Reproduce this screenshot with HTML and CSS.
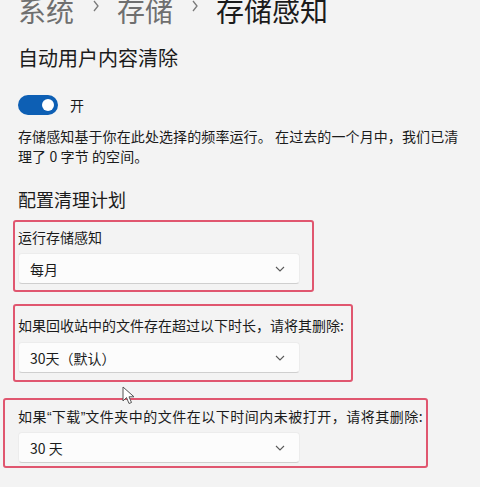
FILE: index.html
```html
<!DOCTYPE html>
<html lang="zh-CN">
<head>
    <meta charset="UTF-8">
    <meta name="viewport" content="width=device-width, initial-scale=1.0">
    <title>存储感知</title>
    <link rel="stylesheet" href="styles.css">
</head>
<body>
    <div class="page">
        <div class="breadcrumb">
            <span class="crumb">系统</span>
            <svg class="crumb-sep" width="8" height="12" viewBox="0 0 8 12"><polyline points="2,1 6,6 2,11" fill="none" stroke="#7a7a7a" stroke-width="1.3"/></svg>
            <span class="crumb">存储</span>
            <svg class="crumb-sep" width="8" height="12" viewBox="0 0 8 12"><polyline points="2,1 6,6 2,11" fill="none" stroke="#7a7a7a" stroke-width="1.3"/></svg>
            <span class="crumb current">存储感知</span>
        </div>

        <h2 class="section-title">自动用户内容清除</h2>

        <div class="toggle-row">
            <div class="toggle"><div class="knob"></div></div>
            <span>开</span>
        </div>

        <p class="desc">存储感知基于你在此处选择的频率运行。 在过去的一个月中，我们已清理了 0 字节 的空间。</p>

        <h3 class="sub-title">配置清理计划</h3>

        <div class="mark mark-1">
            <div class="field-label">运行存储感知</div>
            <div class="select">
                <span>每月</span>
                <svg width="10" height="6" viewBox="0 0 10 6"><polyline points="1,1 5,5 9,1" fill="none" stroke="#5a5a5a" stroke-width="1.1"/></svg>
            </div>
        </div>

        <div class="mark mark-2">
            <div class="field-label">如果回收站中的文件存在超过以下时长，请将其删除:</div>
            <div class="select">
                <span>30天（默认）</span>
                <svg width="10" height="6" viewBox="0 0 10 6"><polyline points="1,1 5,5 9,1" fill="none" stroke="#5a5a5a" stroke-width="1.1"/></svg>
            </div>
        </div>

        <div class="mark mark-3">
            <div class="field-label">如果<span class="q">“</span>下载<span class="q">”</span>文件夹中的文件在以下时间内未被打开，请将其删除:</div>
            <div class="select">
                <span>30 天</span>
                <svg width="10" height="6" viewBox="0 0 10 6"><polyline points="1,1 5,5 9,1" fill="none" stroke="#5a5a5a" stroke-width="1.1"/></svg>
            </div>
        </div>
    </div>

    <!-- mouse pointer captured in the screenshot -->
    <svg class="cursor" width="16" height="20" viewBox="0 0 16 20">
        <path d="M1,1 L1,15 L4.5,11.5 L7,17.5 L9.5,16.5 L7,10.8 L12,10.8 Z" fill="#fff" stroke="#555" stroke-width="1" stroke-linejoin="round"/>
    </svg>
</body>
</html>
```

FILE: styles.css
```css
* {
    margin: 0;
    padding: 0;
    box-sizing: border-box;
}

body {
    background-color: #f3f3f3;
    color: #1b1b1b;
    font-family: "Noto Sans CJK SC", "Noto Sans", "Liberation Sans", sans-serif;
    overflow: hidden;
    position: relative;
    height: 487px;
}

.page {
    padding-left: 18px;
}

.breadcrumb {
    display: flex;
    align-items: center;
    margin-top: -8px;
    height: 36px;
    font-size: 28px;
    line-height: 36px;
}

.crumb {
    color: #6f6f6f;
}

.crumb.current {
    color: #1b1b1b;
}

.crumb-sep {
    margin: 0 17px 0 18px;
    position: relative;
    top: -4px;
}

.section-title {
    margin-top: 16px;
    font-size: 20px;
    line-height: 28px;
    font-weight: 400;
}

.toggle-row {
    display: flex;
    align-items: center;
    gap: 12px;
    margin-top: 23px;
    height: 20px;
    font-size: 14px;
}

.toggle {
    width: 40px;
    height: 20px;
    border-radius: 10px;
    background-color: #0d5fb4;
    display: flex;
    align-items: center;
    justify-content: flex-end;
    padding-right: 4px;
}

.knob {
    width: 12px;
    height: 12px;
    border-radius: 50%;
    background-color: #fff;
}

.desc {
    margin-top: 11px;
    width: 452px;
    font-size: 14px;
    line-height: 20px;
    letter-spacing: 0.1px;
}

.sub-title {
    margin-top: 20px;
    font-size: 18px;
    line-height: 26px;
    font-weight: 400;
}

.mark {
    border: 2px solid #e0566f;
    border-radius: 3px;
}

.mark-1 {
    margin-top: 8px;
    margin-left: -5px;
    width: 301px;
    padding: 5px 0 6px 3px;
}

.mark-2 {
    margin-top: 12px;
    margin-left: -5px;
    width: 340px;
    padding: 9px 0 7px 3px;
}

.mark-3 {
    margin-top: 16px;
    margin-left: -15px;
    width: 425px;
    padding: 6px 0 3px 13px;
}

.field-label {
    font-size: 14px;
    line-height: 20px;
    white-space: nowrap;
}

.mark-3 .field-label {
    letter-spacing: 0.5px;
}

.field-label .q {
    font-family: "Liberation Sans", sans-serif;
    letter-spacing: 0;
}

.select {
    margin-top: 6px;
    width: 282px;
    height: 31px;
    display: flex;
    align-items: center;
    justify-content: space-between;
    padding: 0 14px 0 11px;
    background-color: #fcfcfc;
    border: 1px solid #ececec;
    border-bottom-color: #cfcfcf;
    border-radius: 4px;
    font-size: 14px;
}

.mark-2 .select {
    margin-top: 7px;
}

.mark-3 .select {
    margin-top: 5px;
}

.cursor {
    position: absolute;
    left: 122px;
    top: 386px;
}
```
